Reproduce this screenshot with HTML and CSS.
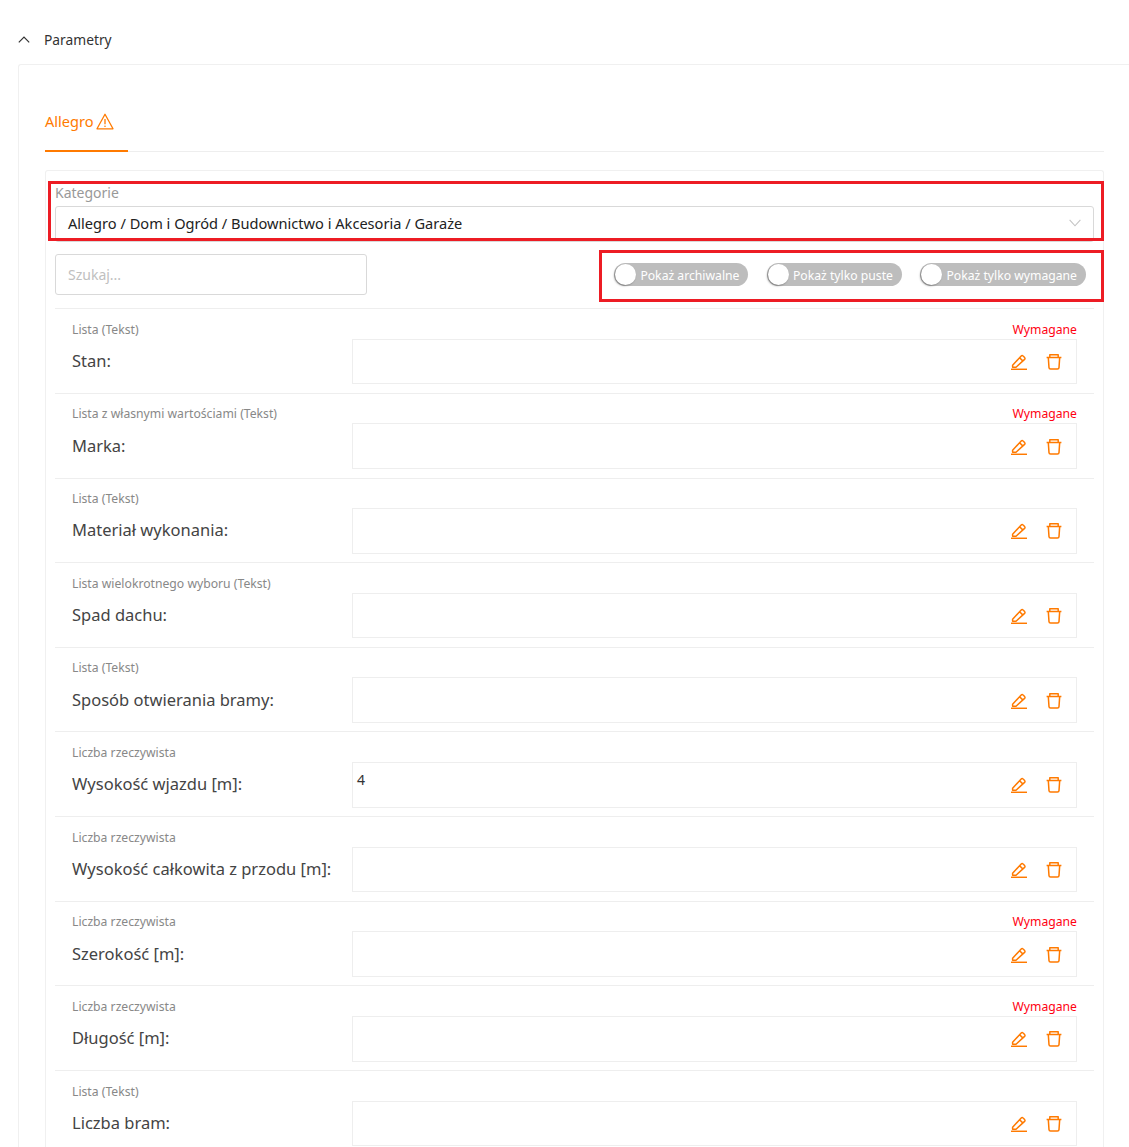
FILE: index.html
```html
<!DOCTYPE html>
<html lang="pl">
<head>
<meta charset="utf-8">
<title>Parametry</title>
<link rel="stylesheet" href="styles.css">
</head>
<body>
<svg width="0" height="0" class="defs">
  <symbol id="pen" viewBox="0 0 16 17"><path d="M1.6 12.2 10.2 3a1.3 1.3 0 0 1 1.9 0l1.5 1.5a1.3 1.3 0 0 1 0 1.9L5 14.3H1.6z M8.6 4.7l3.4 3.4" fill="none" stroke="currentColor" stroke-width="1.5" stroke-linejoin="round"/><path d="M0 16.3h16" stroke="currentColor" stroke-width="1.5"/></symbol>
  <symbol id="bin" viewBox="0 0 16 17"><path d="M.6 4.4h14.8 M2.3 4.4l.7 10.2a1.5 1.5 0 0 0 1.5 1.4h7a1.5 1.5 0 0 0 1.5-1.4l.7-10.2 M3.8 4.4V1.7h8.4v2.7" fill="none" stroke="currentColor" stroke-width="1.5" stroke-linejoin="round"/></symbol>
</svg>
<main class="page">
  <header class="section-head">
    <svg class="chevron-up" width="12" height="7" viewBox="0 0 12 7"><path d="M.8 6.4 6 1l5.2 5.4" fill="none" stroke="#333" stroke-width="1.2"/></svg>
    <span>Parametry</span>
  </header>
  <section class="outer-card">
    <nav class="tabs">
      <div class="tab">
        <span>Allegro</span>
        <svg width="18" height="17" viewBox="0 0 18 17"><path d="M9 1.2 17 15.8H1z" fill="none" stroke="#ff7a00" stroke-width="1.3" stroke-linejoin="round"/><path d="M9 6v5.2" stroke="#ff7a00" stroke-width="1.3"/><circle cx="9" cy="13.2" r=".8" fill="#ff7a00"/></svg>
      </div>
    </nav>
    <div class="inner-card">
      <div class="category">
        <label class="category-label">Kategorie</label>
        <div class="select">
          <span>Allegro / Dom i Ogród / Budownictwo i Akcesoria / Garaże</span>
          <svg width="12" height="8" viewBox="0 0 12 8"><path d="M.6.8 6 6.8 11.4.8" fill="none" stroke="#c4c4c4" stroke-width="1.1"/></svg>
        </div>
      </div>
      <div class="filters">
        <div class="search">Szukaj...</div>
        <div class="toggles">
          <div class="toggle"><i class="knob"></i><span>Pokaż archiwalne</span></div>
          <div class="toggle"><i class="knob"></i><span>Pokaż tylko puste</span></div>
          <div class="toggle"><i class="knob"></i><span>Pokaż tylko wymagane</span></div>
        </div>
      </div>

      <div class="row">
        <div class="row-head"><span>Lista (Tekst)</span><b class="req">Wymagane</b></div>
        <div class="row-body"><div class="name">Stan:</div><div class="field"><span class="value"></span><div class="actions"><svg><use href="#pen"/></svg><svg><use href="#bin"/></svg></div></div></div>
      </div>
      <div class="row">
        <div class="row-head"><span>Lista z własnymi wartościami (Tekst)</span><b class="req">Wymagane</b></div>
        <div class="row-body"><div class="name">Marka:</div><div class="field"><span class="value"></span><div class="actions"><svg><use href="#pen"/></svg><svg><use href="#bin"/></svg></div></div></div>
      </div>
      <div class="row">
        <div class="row-head"><span>Lista (Tekst)</span></div>
        <div class="row-body"><div class="name">Materiał wykonania:</div><div class="field"><span class="value"></span><div class="actions"><svg><use href="#pen"/></svg><svg><use href="#bin"/></svg></div></div></div>
      </div>
      <div class="row">
        <div class="row-head"><span>Lista wielokrotnego wyboru (Tekst)</span></div>
        <div class="row-body"><div class="name">Spad dachu:</div><div class="field"><span class="value"></span><div class="actions"><svg><use href="#pen"/></svg><svg><use href="#bin"/></svg></div></div></div>
      </div>
      <div class="row">
        <div class="row-head"><span>Lista (Tekst)</span></div>
        <div class="row-body"><div class="name">Sposób otwierania bramy:</div><div class="field"><span class="value"></span><div class="actions"><svg><use href="#pen"/></svg><svg><use href="#bin"/></svg></div></div></div>
      </div>
      <div class="row">
        <div class="row-head"><span>Liczba rzeczywista</span></div>
        <div class="row-body"><div class="name">Wysokość wjazdu [m]:</div><div class="field"><span class="value">4</span><div class="actions"><svg><use href="#pen"/></svg><svg><use href="#bin"/></svg></div></div></div>
      </div>
      <div class="row">
        <div class="row-head"><span>Liczba rzeczywista</span></div>
        <div class="row-body"><div class="name">Wysokość całkowita z przodu [m]:</div><div class="field"><span class="value"></span><div class="actions"><svg><use href="#pen"/></svg><svg><use href="#bin"/></svg></div></div></div>
      </div>
      <div class="row">
        <div class="row-head"><span>Liczba rzeczywista</span><b class="req">Wymagane</b></div>
        <div class="row-body"><div class="name">Szerokość [m]:</div><div class="field"><span class="value"></span><div class="actions"><svg><use href="#pen"/></svg><svg><use href="#bin"/></svg></div></div></div>
      </div>
      <div class="row">
        <div class="row-head"><span>Liczba rzeczywista</span><b class="req">Wymagane</b></div>
        <div class="row-body"><div class="name">Długość [m]:</div><div class="field"><span class="value"></span><div class="actions"><svg><use href="#pen"/></svg><svg><use href="#bin"/></svg></div></div></div>
      </div>
      <div class="row">
        <div class="row-head"><span>Lista (Tekst)</span></div>
        <div class="row-body"><div class="name">Liczba bram:</div><div class="field"><span class="value"></span><div class="actions"><svg><use href="#pen"/></svg><svg><use href="#bin"/></svg></div></div></div>
      </div>

      <div class="mark mark-category"></div>
      <div class="mark mark-toggles"></div>
    </div>
  </section>
</main>
</body>
</html>
```
FILE: styles.css
```css
* { box-sizing: border-box; }
html, body { margin: 0; height: 100%; overflow: hidden; background: #fff; }
body { font-family: "Noto Sans", "Open Sans", sans-serif; color: #333; }
.defs { position: absolute; }
.page { height: 1147px; overflow: hidden; padding: 28px 0 0 18px; }

.section-head { display: flex; align-items: center; height: 22px; font-size: 13.8px; color: #333; }
.chevron-up { margin: 0 14px 0 0; }

.outer-card { margin-top: 14px; padding: 32px 25px 0 26px; border: 1px solid #f0f0f0; border-right: 0; border-bottom: 0; border-radius: 3px 0 0 0; height: 1100px; }

.tabs { height: 55px; border-bottom: 1px solid #eee; }
.tab { display: flex; align-items: center; gap: 2px; width: 83px; height: 55px; padding-bottom: 5px; border-bottom: 2px solid #ff7a00; color: #ff7a00; font-size: 14.6px; }

.inner-card { position: relative; margin-top: 18px; padding: 11px 9px 0 9px; border: 1px solid #f0f0f0; border-bottom: 0; border-radius: 3px 3px 0 0; height: 1000px; }

.category-label { display: block; height: 24px; line-height: 21px; font-size: 14px; color: #999; }
.select { display: flex; align-items: center; justify-content: space-between; height: 36px; padding: 0 12px 2px; border: 1px solid #d9d9d9; border-radius: 3px; font-size: 14.6px; color: #222; }

.filters { display: flex; align-items: center; justify-content: space-between; margin-top: 12px; height: 41px; }
.search { width: 312px; height: 41px; line-height: 39px; padding: 0 12px; border: 1px solid #d9d9d9; border-radius: 3px; font-size: 14px; color: #c0c0c0; }
.toggles { display: flex; gap: 18.5px; padding-right: 8px; }
.toggle { display: flex; align-items: center; gap: 4px; height: 23px; padding: 0 9px 0 1px; border-radius: 12px; background: #bdbdbd; color: #fff; font-size: 12.2px; white-space: nowrap; }
.toggle span { padding-top: 1px; }
.knob { width: 21px; height: 21px; border-radius: 50%; background: #fff; box-shadow: -1px 1px 2px rgba(0,0,0,.35); }

.row { height: 84.67px; padding: 12.5px 17px 0 17px; border-top: 1px solid #eee; }
.filters + .row { margin-top: 13.2px; }
.row-head { display: flex; justify-content: space-between; height: 17px; line-height: 16px; font-size: 12.2px; color: #888; }
.req { font-weight: 400; color: #f01; }
.row-body { display: flex; align-items: center; height: 45.67px; }
.name { width: 280px; flex: none; padding-bottom: 2px; font-size: 16.5px; color: #444; }
.field { flex: 1; display: flex; justify-content: space-between; align-items: center; height: 45.67px; padding: 0 14px 0 4px; border: 1px solid #eee; }
.value { align-self: flex-start; line-height: 33px; font-size: 14px; color: #333; }
.actions { display: flex; gap: 19px; color: #ff7a00; }
.actions svg { width: 16px; height: 17px; }

.mark { position: absolute; border: 3px solid #ed1c24; pointer-events: none; }
.mark-category { left: 2px; top: 10px; width: 1056px; height: 60px; }
.mark-toggles { left: 553px; top: 79px; width: 505px; height: 52px; }
```
